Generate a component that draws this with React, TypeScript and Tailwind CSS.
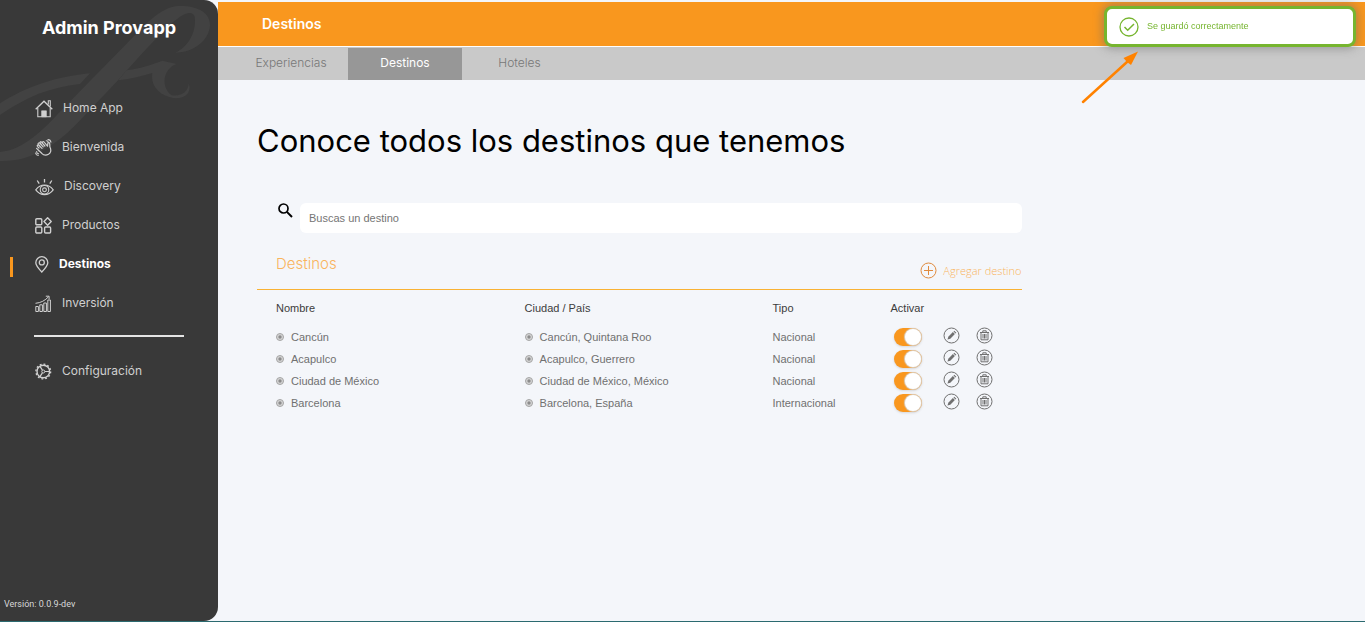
import React from "react";

const montserrat = "font-['Inter','Open_Sans',sans-serif]";
const helvetica = "font-['Liberation_Sans',Arial,sans-serif]";

const HomeIcon = () => (
  <svg width="18" height="18" viewBox="0 0 18 18" fill="none" stroke="currentColor">
    <path d="M0.7 9.2 9 1.2l8.3 8" strokeWidth="1.3" />
    <path d="M2.8 8v8.8h12.4V8" strokeWidth="1.1" />
    <path d="M13.3 4.6V0.8h2v5.6" strokeWidth="1.1" />
    <path d="M6.6 16.8v-6h4.8v6z" fill="currentColor" strokeWidth="0.6" />
  </svg>
);

const WaveIcon = () => (
  <svg width="17" height="17" viewBox="0 0 17 17" fill="none" stroke="currentColor" strokeLinecap="round" strokeLinejoin="round">
    <path
      d="M4.2 12 1.6 9.4M4 9 2.6 7.6c-.9-1 .3-2.1 1.2-1.3L7 9.4M5.4 7.7 3.4 5.4c-.8-1 .5-2.1 1.3-1.2l3.5 3.7M6.5 5.8 5.2 4.2c-.8-1 .6-2 1.3-1.1L9.9 7M7.6 4c-.6-1.3.8-1.9 1.5-1l3.4 4.2.3-2.7c.2-1.3 1.9-1.1 1.9.2l.2 3.4c1.8 3.5.6 6.2-1.4 7.2-2.3 1.2-5 .9-6.8-1L1.9 9.6"
      strokeWidth="1.2"
    />
    <path d="M11.2 1.8c1.2 0 1.9.6 2.2 1.7M13 .6c1.6.1 2.6 1 2.9 2.6M1.6 12.5c0 1.4.7 2.1 2 2.2M.6 14c.2 1.5 1 2.3 2.6 2.4" strokeWidth="1.1" />
  </svg>
);

const EyeIcon = () => (
  <svg width="19" height="18" viewBox="0 0 19 18" fill="none" stroke="currentColor">
    <path d="M.8 11.8C3.2 8.6 6 7 9.500 7s6.300 1.600 8.700 4.800c-2.400 3.200-5.200 4.800-8.700 4.800S3.200 15 .8 11.800z" strokeWidth="1.2" />
    <circle cx="9.5" cy="11.800" r="4.300" strokeWidth="1.100" />
    <circle cx="9.5" cy="11.800" r="1.900" strokeWidth="1.100" />
    <path d="M9.500 1v3.500M2.200 2.500 4.200 5.600M16.800 2.500l-2 3.100" strokeWidth="1.300" />
  </svg>
);

const ProductsIcon = () => (
  <svg width="17" height="17" viewBox="0 0 17 17" fill="none" stroke="currentColor" strokeWidth="1.400">
    <rect x=".8" y="1.800" width="6" height="6" rx="1" />
    <rect x=".8" y="10" width="6" height="6" rx="1" />
    <rect x="9.600" y="10" width="6" height="6" rx="1" />
    <path d="M12.600.8 16.200 4.500 12.600 8.200 9 4.500z" strokeLinejoin="round" />
  </svg>
);

const PinIcon = () => (
  <svg width="14" height="17" viewBox="0 0 14 17" fill="none" stroke="currentColor" strokeWidth="1.300">
    <path d="M6.800 16C3.600 12.600.8 9.600.8 6.700a6 6 0 0 1 12 0c0 2.900-2.800 5.900-6 9.300z" />
    <circle cx="6.800" cy="6.400" r="2.500" />
  </svg>
);

const ChartIcon = () => (
  <svg width="17" height="17" viewBox="0 0 17 17" fill="none" stroke="currentColor">
    <path d="M.8 16.500v-5h2.600v5zM4.800 16.500v-6.700h2.600v6.700zM8.800 16.500V8h2.600v8.500zM12.800 16.500V5h2.600v11.500z" />
    <path d="M.5 8.300C6 7.800 10 5.600 13.600 1.700M10.800 1.200h3.300v3" />
  </svg>
);

const GearIcon = () => (
  <svg width="17" height="17" viewBox="0 0 17 17" fill="none" stroke="currentColor">
    <circle cx="8.300" cy="8.500" r="6.300" strokeWidth="1.400" />
    <circle cx="8.300" cy="8.500" r="7.400" strokeWidth="1.300" strokeDasharray="1.900 1.975" />
    <circle cx="8.300" cy="8.500" r="1.500" />
    <path d="M9.800 8.500h5M7.400 7.200 4.800 3.200M7.400 9.800 4.800 13.800" strokeWidth="1.200" />
  </svg>
);

const PencilIcon = () => (
  <svg width="17" height="17" viewBox="0 0 17 17" fill="none" stroke="currentColor">
    <circle cx="8.500" cy="8.500" r="7.500" />
    <path d="M4.500 12.500 5.300 9.700 9.900 5.100 11.900 7.100 7.300 11.700z" fill="currentColor" stroke="none" />
    <path d="M10.500 4.500 11.300 3.700 13.300 5.700 12.500 6.500z" fill="currentColor" stroke="none" />
  </svg>
);

const TrashIcon = () => (
  <svg width="17" height="17" viewBox="0 0 17 17" fill="none" stroke="currentColor">
    <circle cx="8.500" cy="8.500" r="7.500" />
    <path d="M4 5.500h9M6.800 5.300V3.800h3.400v1.500M5 5.500v7.300h7V5.500M7 7v4.500M8.500 7v4.500M10 7v4.500" />
  </svg>
);

const menuItems = [
  { label: "Home App", icon: <HomeIcon /> },
  { label: "Bienvenida", icon: <WaveIcon /> },
  { label: "Discovery", icon: <EyeIcon /> },
  { label: "Productos", icon: <ProductsIcon /> },
  { label: "Destinos", icon: <PinIcon />, active: true },
  { label: "Inversión", icon: <ChartIcon /> },
];

const destinations = [
  { name: "Cancún", city: "Cancún, Quintana Roo", type: "Nacional" },
  { name: "Acapulco", city: "Acapulco, Guerrero", type: "Nacional" },
  { name: "Ciudad de México", city: "Ciudad de México, México", type: "Nacional" },
  { name: "Barcelona", city: "Barcelona, España", type: "Internacional" },
];

interface MenuLinkProps {
  label: string;
  icon: React.ReactNode;
  active?: boolean;
}

function MenuLink({ label, icon, active }: MenuLinkProps) {
  return (
    <a
      href="#"
      className={`relative flex h-[39px] items-center gap-2.5 pl-[35px] text-xs ${
        active ? "font-bold text-white" : "text-[#d0d0d0]"
      }`}
    >
      {active && <span className="absolute left-[10px] top-[13px] h-5 w-[3px] bg-[#f9971e]" />}
      <span className="pt-0.5 text-[#d0d0d0]">{icon}</span>
      {label}
    </a>
  );
}

function Sidebar() {
  return (
    <aside className="relative flex w-[218px] shrink-0 flex-col overflow-hidden rounded-r-[14px] bg-[#393939]">
      <svg className="absolute left-0 top-0" width="218" height="165" viewBox="0 0 654 495" fill="#424242">
        <path d="M0 456C70 450 125 395 190 325L420 90C470 38 505 18 540 18C600 18 632 42 630 78C626 122 580 158 526 158C570 138 590 88 584 50C580 34 560 36 540 50C500 78 440 145 350 245L255 345C170 440 90 486 0 483Z" />
        <path d="M0 310C80 260 160 232 270 220L240 252C150 262 80 290 0 345Z" />
        <path d="M380 211C425 204 455 194 487 182L530 192C488 206 482 262 515 286C545 290 565 275 566 250C578 284 545 302 510 292C470 280 452 252 457 219C420 230 385 238 355 241Z" />
      </svg>
      <div className="relative flex flex-1 flex-col">
        <h2 className="pt-4 text-center text-lg leading-6 font-bold text-white">Admin Provapp</h2>
        <nav className="mt-12">
          {menuItems.map((item) => (
            <MenuLink key={item.label} {...item} />
          ))}
          <hr className="mx-[34px] mt-[13px] mb-[14px] border-t-2 border-[#e4e4e4]" />
          <MenuLink label="Configuración" icon={<GearIcon />} />
        </nav>
        <p className="mt-auto pb-[11px] pl-1 font-['Roboto',sans-serif] text-[9px] leading-3 text-[#d8d8d8]">Versión: 0.0.9-dev</p>
      </div>
    </aside>
  );
}

function Tabs() {
  return (
    <nav className="flex h-[33px] items-stretch bg-[#c9c9c9] pl-4 text-center text-xs leading-8 font-light text-[#777777]">
      <a href="#" className="w-[114px]">Experiencias</a>
      <a href="#" className="mt-px w-[114px] bg-[#979797] leading-[30px] font-normal text-white">Destinos</a>
      <a href="#" className="w-[115px]">Hoteles</a>
    </nav>
  );
}

function Bullet() {
  return (
    <svg className="mr-[7px] inline-block align-[0px]" width="8" height="8" viewBox="0 0 8 8">
      <circle cx="4" cy="4" r="3.500" fill="#d6d6d6" stroke="#a4a4a4" />
      <circle cx="4" cy="4" r="1.700" fill="#8c8c8c" />
    </svg>
  );
}

function Toggle({ label }: { label: string }) {
  return (
    <label className="ml-[3px] flex h-[18px] w-7 cursor-pointer items-center rounded-full bg-[#ded8d2] p-px shadow-sm has-checked:justify-end has-checked:bg-[#f9971e]">
      <input type="checkbox" defaultChecked aria-label={label} className="peer sr-only" />
      <span className="h-4 w-4 rounded-full bg-white shadow-[0_0_1px_1px_#d9d2ca]" />
    </label>
  );
}

function DestinationsTable() {
  return (
    <table className={`w-full table-fixed text-left text-[11px] leading-4 text-[#707070] ${helvetica}`}>
      <thead>
        <tr className="h-9 text-[#3c3c3c]">
          <th className="w-[35%] pl-[19px] font-normal">Nombre</th>
          <th className="font-normal">Ciudad / País</th>
          <th className="w-[118px] font-normal">Tipo</th>
          <th className="w-11 font-normal">Activar</th>
          <th className="w-[33px]" />
          <th className="w-[54px]" />
        </tr>
      </thead>
      <tbody>
        {destinations.map(({ name, city, type }) => (
          <tr key={name} className="h-[22px]">
            <td className="pl-[19px]"><Bullet />{name}</td>
            <td><Bullet />{city}</td>
            <td>{type}</td>
            <td><Toggle label={`Activar ${name}`} /></td>
            <td className="pb-1">
              <button type="button" aria-label={`Editar ${name}`} className="ml-2 block"><PencilIcon /></button>
            </td>
            <td className="pb-1">
              <button type="button" aria-label={`Eliminar ${name}`} className="ml-2 block"><TrashIcon /></button>
            </td>
          </tr>
        ))}
      </tbody>
    </table>
  );
}

function Toast() {
  return (
    <div className="fixed top-1.5 right-[9px] z-10 w-[252px]">
      <div
        role="status"
        className={`flex h-[41px] items-center gap-2 rounded-lg border-3 border-[#76b52f] bg-white pl-3 text-[9px] text-[#76b52f] shadow-[0_0_8px_2px_rgba(110,110,110,0.5)] ${helvetica}`}
      >
        <svg width="20" height="20" viewBox="0 0 20 20" fill="none" stroke="currentColor" strokeWidth="1.300">
          <circle cx="10" cy="10" r="9" />
          <path d="M5.500 10 8.700 13.200 15 7" strokeWidth="1.500" />
        </svg>
        Se guardó correctamente
      </div>
      {/* arrow that points at the notification */}
      <svg className="absolute top-11 -left-6" width="58" height="54" viewBox="0 0 58 54">
        <path d="M3 56 47 16" stroke="#ff8200" strokeWidth="2.500" strokeLinecap="round" transform="translate(0 -4)" />
        <path d="M58 5.500 43.500 12 47 16 51 19z" fill="#ff8200" transform="translate(0 -4)" />
      </svg>
    </div>
  );
}

export default function App() {
  return (
    <div className={`flex min-h-screen border-b border-[#2b6a70] bg-[#f4f6fa] ${montserrat}`}>
      <Sidebar />
      <main className="min-w-0 flex-1">
        <header className="mt-0.5 flex h-[45px] items-center border-b border-white bg-[#f9971e] pl-11">
          <span className="text-sm font-semibold text-white">Destinos</span>
        </header>
        <Tabs />
        <section className="pt-[41px] pl-[39px]">
          <h1 className="text-[31px] leading-10 text-black">Conoce todos los destinos que tenemos</h1>
          <div className="mt-[42px] w-[69%]">
            <div className="flex gap-[7px] pl-[21px]">
              <label htmlFor="search">
                <svg width="15" height="15" viewBox="0 0 15 15" fill="none" stroke="#000">
                  <circle cx="5.500" cy="5.500" r="4.500" strokeWidth="1.700" />
                  <path d="M8.900 8.900 14 14" strokeWidth="2" />
                </svg>
              </label>
              <input
                id="search"
                type="text"
                aria-label="Buscas un destino"
                placeholder="Buscas un destino"
                className={`h-[30px] min-w-0 flex-1 rounded-md bg-white px-[9px] text-[11px] outline-none placeholder:text-[#757575] ${helvetica}`}
              />
            </div>
            <div className="flex h-[57px] items-end justify-between border-b border-[#f9b233] pl-[19px] font-light text-[#f9b45c]">
              <h3 className="mb-[13px] text-[15px] leading-6">Destinos</h3>
              <button type="button" className="mb-2.5 flex items-center gap-1.5 font-['Open_Sans',sans-serif] text-[11px] leading-4">
                <svg width="17" height="17" viewBox="0 0 17 17" fill="none" stroke="#e08a3c">
                  <circle cx="8.500" cy="8.500" r="7.500" />
                  <path d="M8.500 4v9M4 8.500h9" />
                </svg>
                Agregar destino
              </button>
            </div>
            <DestinationsTable />
          </div>
        </section>
      </main>
      <Toast />
    </div>
  );
}
